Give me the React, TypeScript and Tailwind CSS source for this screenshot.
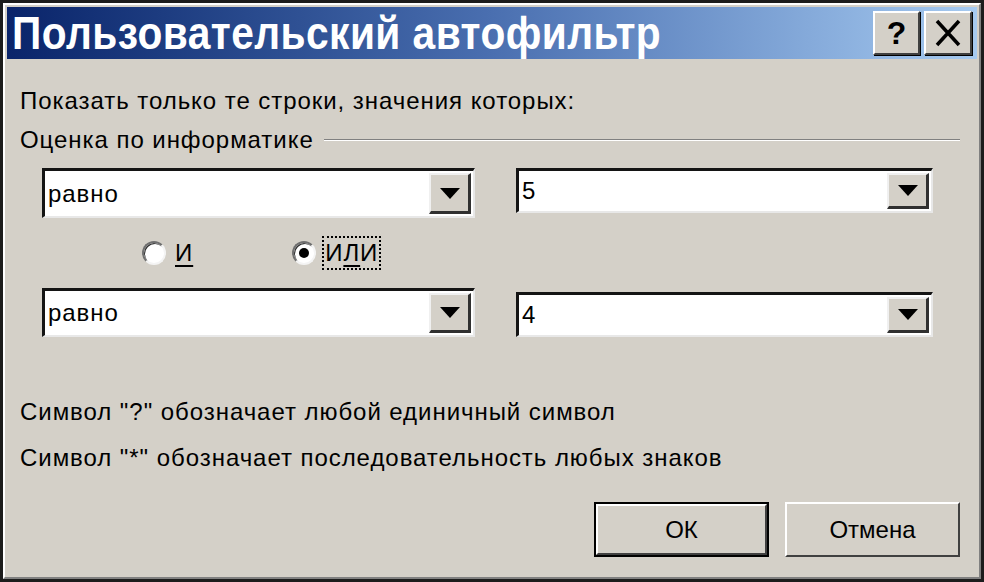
import { ReactNode } from "react";

const font = "font-['Liberation_Sans',Arial,sans-serif]";
const txt = "text-[24px] tracking-[0.95px]";

function DropButton() {
  return (
    <div className="w-[42px] h-full bg-[#d4d0c8] border-t-2 border-l-2 border-t-[#f0f0f0] border-l-[#f0f0f0] border-b-[3px] border-r-[3px] border-b-[#303030] border-r-[#303030] flex items-center justify-center">
      <svg width="20" height="11" viewBox="0 0 20 11">
        <path d="M0 0 H20 L10 11 Z" fill="#000" />
      </svg>
    </div>
  );
}

function Combo({ value, className }: { value: string; className: string }) {
  return (
    <div
      className={`flex bg-white border-t-[3px] border-l-[3px] border-t-[#141414] border-l-[#141414] border-b-2 border-r-2 border-b-[#e8e8e8] border-r-[#e8e8e8] p-[2px] ${className}`}
    >
      <div className={`flex-1 flex items-center pl-[1px] text-black ${txt}`}>{value}</div>
      <DropButton />
    </div>
  );
}

function Radio({ checked, children, focused }: { checked?: boolean; children: ReactNode; focused?: boolean }) {
  return (
    <div className="flex items-center gap-[6px]">
      <span className="w-[24px] h-[24px] rounded-full bg-white border-2 border-t-[#707070] border-l-[#707070] border-b-[#f4f4f4] border-r-[#f4f4f4] shadow-[inset_1px_1px_0_#303030] flex items-center justify-center">
        {checked && <span className="w-[10px] h-[10px] rounded-full bg-black" />}
      </span>
      <span
        className={`${txt} leading-[30px] px-[1px] ${
          focused ? "border-2 border-dotted border-black" : "border-2 border-transparent"
        }`}
      >
        {children}
      </span>
    </div>
  );
}

function Button({ label, isDefault }: { label: string; isDefault?: boolean }) {
  return (
    <div className={`w-[175px] h-[55px] ${isDefault ? "border-2 border-black" : ""}`}>
      <div className="h-full bg-[#d4d0c8] border-t-2 border-l-2 border-t-white border-l-white border-b-2 border-r-2 border-b-[#404040] border-r-[#404040] flex items-center justify-center text-[24px] text-black">
        {label}
      </div>
    </div>
  );
}

export default function App() {
  return (
    <div className={`w-[984px] h-[582px] bg-[#d4d0c8] border-[3px] border-[#1c1c1c] ${font}`}>
      <div className="h-full border-t-2 border-l-2 border-t-white border-l-white border-b-2 border-r-2 border-b-[#808080] border-r-[#808080] p-[2px] flex flex-col">
        {/* Title bar */}
        <div className="h-[52px] bg-linear-to-r from-[#0a246a] via-[#4a6fb0] to-[#a6caf0] flex items-center pl-[5px] pr-[5px]">
          <div className="flex-1">
            <span className="inline-block origin-left scale-x-[0.885] text-white font-bold text-[46px] leading-[52px] tracking-[0.5px] whitespace-nowrap">
              Пользовательский автофильтр
            </span>
          </div>
          <div className="flex gap-[4px] items-center">
            <div className="w-[47px] h-[44px] bg-[#d4d0c8] border-t-2 border-l-2 border-t-white border-l-white border-b-2 border-r-2 border-b-[#404040] border-r-[#404040] shadow-[1px_1px_0_#000] flex items-center justify-center text-[32px] font-bold text-black leading-none">
              ?
            </div>
            <div className="w-[48px] h-[44px] bg-[#d4d0c8] border-t-2 border-l-2 border-t-white border-l-white border-b-2 border-r-2 border-b-[#404040] border-r-[#404040] shadow-[1px_1px_0_#000] flex items-center justify-center">
              <svg width="26" height="28" viewBox="0 0 26 28">
                <path d="M2 2 L24 26 M24 2 L2 26" stroke="#000" strokeWidth="3.5" />
              </svg>
            </div>
          </div>
        </div>

        {/* Body */}
        <div className="flex-1 flex flex-col pl-[13px] pr-[17px] text-black">
          <div className={`mt-[29px] h-[26px] leading-[26px] ${txt}`}>
            Показать только те строки, значения которых:
          </div>
          <div className={`mt-[13px] h-[26px] flex items-center gap-[10px] leading-[26px] ${txt}`}>
            <span>Оценка по информатике</span>
            <div className="flex-1 border-t border-t-[#808080] border-b border-b-white" />
          </div>

          <div className="mt-[15px] ml-[22px] flex items-start gap-[41px]">
            <Combo value="равно" className="w-[433px] h-[50px]" />
            <Combo value="5" className="w-[417px] h-[45px]" />
          </div>

          <div className="mt-[17px] ml-[122px] h-[36px] flex items-center gap-[96px]">
            <Radio>
              <span className="underline underline-offset-4">И</span>
            </Radio>
            <Radio checked focused>
              И<span className="underline underline-offset-4">Л</span>И
            </Radio>
          </div>

          <div className="mt-[17px] ml-[22px] flex items-end gap-[41px] h-[49px]">
            <Combo value="равно" className="w-[433px] h-[49px]" />
            <Combo value="4" className="w-[417px] h-[45px]" />
          </div>

          <div className={`mt-[62px] h-[26px] leading-[26px] ${txt}`}>
            Символ "?" обозначает любой единичный символ
          </div>
          <div className={`mt-[20px] h-[26px] leading-[26px] ${txt}`}>
            Символ "*" обозначает последовательность любых знаков
          </div>

          <div className="mt-[31px] flex justify-end gap-[16px]">
            <Button label="ОК" isDefault />
            <Button label="Отмена" />
          </div>
        </div>
      </div>
    </div>
  );
}
